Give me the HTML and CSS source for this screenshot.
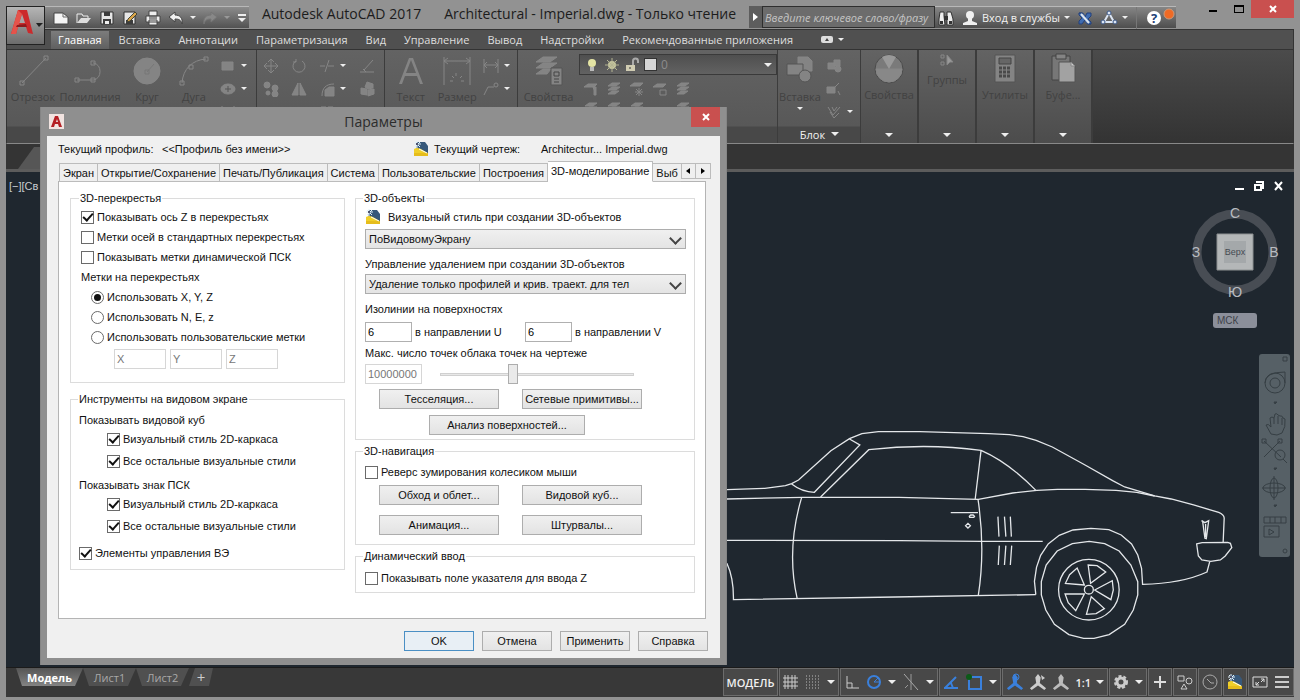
FILE: index.html
```html
<!DOCTYPE html>
<html lang="ru">
<head>
    <meta charset="UTF-8">
    <title>Autodesk AutoCAD 2017</title>
    <link rel="stylesheet" href="styles.css">
</head>
<body>
    <svg class="defs">
        <symbol id="dwg" viewBox="0 0 16 16">
            <path d="M4 1h8l3 4v7H3z" fill="#37587a"/>
            <path d="M1 8c5-3 8 1 14 4v3H1z" fill="#f0cf2a"/>
            <path d="M1 12h14v3H1z" fill="#e6bd1c"/>
            <path d="M6 8l8 4" stroke="#fff"/>
            <path d="M4 0v7M1 3h7M2 1l5 5M7 1L2 6" stroke="#dff0fa"/>
            <circle cx="4" cy="3" r="1" fill="#224"/>
        </symbol>
        <symbol id="layer" viewBox="0 0 16 16">
            <path d="M6 2h8l-4 3H2zM6 6h8l-4 3H2zM6 10h7l-4 3H2z"/>
        </symbol>
        <symbol id="person" viewBox="0 0 20 20">
            <path d="M10 1l3 4-1 6 7 6-2 2-7-5-7 5-2-2 7-6-1-6z"/>
        </symbol>
    </svg>

    <div class="window">
        <header class="titlebar">
            <button class="app-button" aria-label="Меню приложения">
                <svg width="38" height="37" viewBox="0 0 38 37">
                    <path d="M4 27L11 3h9l6 24-5-1-2-6h-8l-2 7z" fill="#cb2a2c"/>
                    <path d="M12 16l3-9 3 9z" fill="#a9a5a5"/>
                    <path d="M4 27L11 3l4 4-6 20z" fill="#e5534b"/>
                    <path d="M10 18l9-1 1 3H9z" fill="#8f191c"/>
                    <path d="M29 16h7l-4 4z" fill="#222"/>
                </svg>
            </button>
            <div class="quick">
                <button aria-label="Создать"><svg width="16" height="16"><path d="M1 3h9l5 4v7H1z" fill="#f4f4f4" stroke="#444"/><path d="M10 3v4h5" fill="none" stroke="#666"/></svg></button>
                <button aria-label="Открыть"><svg width="16" height="16"><path d="M1 13V4h5l1 2h5v2" fill="none" stroke="#eee"/><path d="M1 13l4-5h10l-4 5z" fill="#ddd"/></svg></button>
                <button aria-label="Сохранить"><svg width="16" height="16"><path d="M2 2h12v12H2z" fill="#e6e6e6" stroke="#333"/><path d="M5 2h6v4H5zM4 9h8v5H4z" fill="#3c3c3c"/><path d="M6 11h4v3H6z" fill="#eee"/></svg></button>
                <button aria-label="Сохранить как"><svg width="16" height="16"><path d="M2 2h11v12H2z" fill="#e6e6e6" stroke="#333"/><path d="M4 10h7v4H4z" fill="#3c3c3c"/><path d="M6 9l7-7 2 2-7 7-3 1z" fill="#d9a54a" stroke="#443"/></svg></button>
                <button aria-label="Печать"><svg width="16" height="16"><path d="M4 1h8v5H4zM1 6h14v6H1zM4 10h8v5H4z" fill="#eee" stroke="#444"/><path d="M4 8h8" stroke="#333"/></svg></button>
                <button aria-label="Отменить"><svg width="16" height="16"><path d="M1 7l6-5v3c5 0 8 3 7 9-1-4-3-5-7-5v3z" fill="#f0f0f0" stroke="#444"/></svg></button>
                <i class="caret"></i>
                <button aria-label="Повторить"><svg width="16" height="16"><path d="M15 7L9 2v3c-5 0-8 3-7 9 1-4 3-5 7-5v3z" fill="#888" stroke="#757575"/></svg></button>
                <i class="caret dim"></i>
                <button aria-label="Настройка"><svg width="12" height="16"><path d="M2 4h8v2H2zM2 8h8l-4 4z" fill="#eee"/></svg></button>
            </div>
            <h1 class="caption"><span>Autodesk AutoCAD 2017</span><span>Architectural - Imperial.dwg - Только чтение</span></h1>
            <div class="search">
                <button aria-label="Развернуть"><svg width="5" height="8"><path d="M0 0l5 4-5 4z" fill="#fff"/></svg></button>
                <input type="text" aria-label="Поиск" placeholder="Введите ключевое слово/фразу">
            </div>
            <div class="info">
                <button aria-label="Найти"><svg width="18" height="16"><path d="M3 2h4v4l1 9H2V9zM10 2h4l2 7v6h-6V6z" fill="#eee" stroke="#333"/><path d="M7 6h4v4H7zM3 11h3v3H3zM12 11h3v3h-3z" fill="#333"/></svg></button>
                <button class="login"><svg width="16" height="16"><circle cx="8" cy="5" r="4" fill="#f0f0f0"/><path d="M6 8h4v3l5 2v2H1v-2l5-2z" fill="#f0f0f0"/></svg>Вход в службы<i class="caret small"></i></button>
                <button aria-label="Exchange"><svg width="16" height="16"><path d="M2 3h4l8 11h-4z" fill="#dde6ef" stroke="#2a4a80"/><path d="M10 3h4v3l-3 3 3 3v2h-3L8 10l-3 4H2v-3l3-3-3-3V3h3l3 4z" fill="#3f6cb0" stroke="#24407a"/><path d="M4 4l8 9" stroke="#dde6ef" stroke-width="2"/></svg></button>
                <button aria-label="A360"><svg width="18" height="16"><path d="M9 3l5 9H4z" fill="none" stroke="#dce6f4" stroke-width="2"/><g fill="#dce6f4" stroke="#3a5686"><circle cx="9" cy="3" r="2"/><circle cx="3" cy="12" r="2"/><circle cx="15" cy="12" r="2"/></g></svg><i class="caret small"></i></button>
                <button class="help" aria-label="Справка"><svg width="31" height="22"><circle cx="9" cy="11" r="7" fill="#fff"/><text x="6" y="16" font-size="13" font-weight="700" fill="#1d3f77">?</text><circle cx="24" cy="7" r="5" fill="#ef6a25" stroke="#c99a7c"/></svg></button>
            </div>
            <div class="window-buttons">
                <button aria-label="Свернуть"><svg width="12" height="16"><path d="M2 10h8v2H2z"/></svg></button>
                <button aria-label="Развернуть"><svg width="12" height="16"><path d="M1 5h10v8H1zM2 7v5h8V7z" fill-rule="evenodd"/></svg></button>
                <button class="close" aria-label="Закрыть"><svg width="10" height="10"><path d="M2 2l6 6M8 2L2 8" stroke="#fff" stroke-width="2"/></svg></button>
            </div>
        </header>

        <nav class="ribbon-tabs">
            <a href="#" class="active">Главная</a>
            <a href="#">Вставка</a>
            <a href="#">Аннотации</a>
            <a href="#">Параметризация</a>
            <a href="#">Вид</a>
            <a href="#">Управление</a>
            <a href="#">Вывод</a>
            <a href="#">Надстройки</a>
            <a href="#">Рекомендованные приложения</a>
            <button aria-label="Свернуть ленту"><svg width="12" height="8"><rect width="12" height="7" rx="2" fill="#ddd"/><path d="M4 5h4L6 2z" fill="#444"/></svg><i class="caret small"></i></button>
        </nav>

        <div class="ribbon">
            <section class="panel draw">
                <div class="tools">
                    <button class="big"><svg width="32" height="32"><path d="M5 28L29 3" /><path d="M3 26h4v4H3zM27 1h4v4h-4z"/></svg>Отрезок</button>
                    <button class="big wide"><svg width="32" height="32"><path d="M3 25h17a9 9 0 0 0 0-17h-1"/><path d="M1 23h4v4H1zM17 23h4v4h-4zM17 6h4v4h-4z"/></svg>Полилиния</button>
                    <button class="big"><svg width="32" height="32"><circle cx="16" cy="16" r="13" class="fill"/><path d="M16 17l7-8M14 15h4v4h-4z" stroke="#777"/></svg>Круг</button>
                    <button class="big slim"><svg width="32" height="32"><path d="M4 28C5 14 14 5 28 4"/><path d="M2 26h4v4H2zM11 10h4v4h-4zM26 2h4v4h-4z"/></svg>Дуга</button>
                    <div class="grid one">
                        <button aria-label="Прямоугольник"><svg width="16" height="16"><path d="M2 4h11v8H2z" class="fill"/></svg><i class="caret small"></i></button>
                        <button aria-label="Эллипс"><svg width="16" height="16"><ellipse cx="8" cy="8" rx="7" ry="5" class="fill"/><path d="M8 5v6M5 8h6" stroke="#555"/></svg><i class="caret small"></i></button>
                        <button aria-label="Штриховка"><svg width="16" height="16"><path d="M2 4h12M2 2v12M14 2v12"/></svg></button>
                    </div>
                </div>
            </section>
            <section class="panel modify">
                <div class="grid">
                    <button aria-label="Перенести"><svg width="16" height="16"><path d="M8 1v14M1 8h14M5 4l3-3 3 3M5 12l3 3 3-3M4 5L1 8l3 3M12 5l3 3-3 3"/></svg></button>
                    <button aria-label="Повернуть"><svg width="16" height="16"><path d="M5 3a6 6 0 1 0 6 0M5 1v3H2"/></svg></button>
                    <button aria-label="Обрезать"><svg width="16" height="16"><path d="M1 8h5M9 8h6M10 2L6 14"/></svg><i class="caret small"></i></button>
                    <button aria-label="Стереть"><svg width="16" height="16"><path d="M1 14h14M5 12l9-10"/><path d="M4 11l3 3"/></svg></button>
                    <button aria-label="Копировать"><svg width="16" height="16" class="solid"><circle cx="4" cy="4" r="3"/><circle cx="12" cy="7" r="3"/><circle cx="5" cy="12" r="2"/><circle cx="12" cy="13" r="3"/></svg></button>
                    <button aria-label="Зеркало"><svg width="16" height="16" class="solid"><path d="M7 2v12H1zM9 2v12h6z"/></svg></button>
                    <button aria-label="Сопряжение"><svg width="16" height="16"><path d="M3 15C3 7 7 3 15 3"/><path d="M6 15V9l4-3h5v9z" class="fill"/></svg><i class="caret small"></i></button>
                    <button aria-label="Расчленить"><svg width="16" height="16" class="solid"><path d="M8 1l6 2v4l-5 1-3-2zM2 7l6 1v6l-6-1zM9 9l6-1v5l-6 2z"/></svg></button>
                    <button aria-label="Растянуть"><svg width="16" height="16"><path d="M2 4h8v9H2z"/></svg></button>
                    <button aria-label="Масштаб"><svg width="16" height="16"><path d="M2 4h12v9H2z" class="fill"/></svg></button>
                    <button aria-label="Массив"><svg width="16" height="16" class="solid"><path d="M2 3h5v4H2zM9 3h5v4H9z"/></svg></button>
                    <button aria-label="Подобие"><svg width="16" height="16"><path d="M4 8l4-5 4 5"/></svg></button>
                </div>
            </section>
            <section class="panel annotate">
                <div class="tools">
                    <button class="big"><svg width="32" height="32" class="solid"><path d="M14 3h4l10 26h-3l-3-8H10l-3 8H4zM11 18h10l-5-13z" stroke="none"/></svg>Текст</button>
                    <button class="big slim"><svg width="32" height="32"><path d="M3 2v28M29 2v28M3 6h26M7 3L3 6l4 3M25 3l4 3-4 3"/><path d="M9 26h3M20 26h3M15 18v3M11 21l2 2M21 21l-2 2"/></svg>Размер</button>
                    <div class="grid one">
                        <button aria-label="Линейный"><svg width="16" height="16"><path d="M1 1v14M15 1v14M1 7h14M4 4L1 7l3 3M12 4l3 3-3 3"/></svg><i class="caret small"></i></button>
                        <button aria-label="Выноска"><svg width="16" height="16"><path d="M1 14L5 6h6"/><circle cx="13" cy="4" r="2"/></svg><i class="caret small"></i></button>
                        <button aria-label="Таблица"><svg width="16" height="16"><path d="M2 4h12v9H2z"/></svg></button>
                    </div>
                </div>
            </section>
            <section class="panel layers">
                <div class="tools">
                    <button class="big wide"><svg width="32" height="32"><g class="fill"><path d="M10 2h14l-7 5H3zM10 8h14l-7 5H3zM10 14h8l-4 5H3z"/><path d="M18 13h11v17H18z" stroke="#555"/></g><path d="M21 17h5v4h-5zM21 24h5M21 27h5" stroke="#444"/></svg>Свойства</button>
                    <div class="layer-tools">
                        <button class="combo">
                            <svg width="16" height="16"><circle cx="8" cy="6" r="4" fill="#e4e4a4"/><path d="M6 10h4v4H6z" fill="#bbb"/></svg>
                            <svg width="16" height="16"><circle cx="8" cy="8" r="4" fill="#c9c9a0"/><path d="M8 1v14M1 8h14M3 3l10 10M13 3L3 13" stroke="#b4b492"/></svg>
                            <svg width="16" height="16"><path d="M2 8h9v6H2z" fill="#d0ccb2"/><path d="M9 8V4a2 2 0 0 1 5 0v2" fill="none" stroke="#aaa" stroke-width="2"/><path d="M6 10v2" stroke="#333"/></svg>
                            <b class="swatch"></b>
                            <span>0</span>
                            <i class="caret"></i>
                        </button>
                        <div class="layer-icons">
                            <button aria-label="Отключить слой"><svg width="16" height="16" class="solid"><path d="M5 3h9l-3 3H1zM10 6h3v8h-2V9z"/></svg></button>
                            <button aria-label="Изолировать слой"><svg width="16" height="16" class="solid"><use href="#layer"/></svg></button>
                            <button aria-label="Заморозить слой"><svg width="16" height="16" class="solid"><path d="M5 2h9l-3 3H1z"/><path d="M10 7v8M6 11h8M7 8l6 6M13 8l-6 6"/></svg></button>
                            <button aria-label="Блокировать слой"><svg width="16" height="16" class="solid"><path d="M5 3h9l-3 3H1z"/><path d="M8 9h6v5H8z" fill="none"/></svg></button>
                            <button aria-label="Сделать текущим"><svg width="16" height="16" class="solid"><use href="#layer"/></svg></button>
                            <button aria-label="Включить слои"><svg width="16" height="16" class="solid"><use href="#layer"/></svg></button>
                            <button aria-label="Разизолировать"><svg width="16" height="16" class="solid"><use href="#layer"/></svg></button>
                            <button aria-label="Разморозить"><svg width="16" height="16" class="solid"><use href="#layer"/></svg></button>
                            <span></span>
                            <button aria-label="Копия свойств слоя"><svg width="16" height="16" class="solid"><use href="#layer"/></svg></button>
                        </div>
                    </div>
                </div>
            </section>
            <section class="panel block">
                <div class="tools">
                    <button class="big"><svg width="32" height="32" class="solid"><path d="M14 2h10l4 4v10H14z"/><path d="M3 9h16v11H3z" stroke="#555"/><circle cx="21" cy="21" r="6" stroke="#555"/></svg>Вставка<i class="caret small"></i></button>
                    <div class="grid one">
                        <button aria-label="Создать блок"><svg width="16" height="16" class="solid"><path d="M2 5h7v6H2zM8 2h6v6H8z"/><circle cx="12" cy="11" r="3"/></svg></button>
                        <button aria-label="Редактор блоков"><svg width="16" height="16" class="solid"><path d="M1 6h8v6H1z"/><path d="M7 8l6-6M12 10l2 4"/></svg></button>
                        <button aria-label="Атрибуты"><svg width="16" height="16"><path d="M2 3l5 8 7-8M4 8l4 6 5-5M6 3l2 4 3-4"/></svg><i class="caret small"></i></button>
                    </div>
                </div>
                <button class="panel-title">Блок <i class="caret"></i></button>
            </section>
            <section class="panel mini">
                <button class="big"><svg width="32" height="32"><circle cx="16" cy="16" r="14" fill="#7a7a7a" stroke="#4b4b4b"/><path d="M3 16h26a13 13 0 0 1-26 0z" fill="#888"/><path d="M16 16L9 4a14 14 0 0 1 14 0z" fill="#999" stroke="none"/></svg>Свойства</button>
                <i class="caret"></i>
            </section>
            <section class="panel mini">
                <button class="big short"><svg width="16" height="16"><path d="M2 2h3v3H2zM2 9h3v3H2z"/><path d="M8 2v10l3-3h3z" fill="#999"/></svg>Группы</button>
                <i class="caret"></i>
            </section>
            <section class="panel mini">
                <button class="big"><svg width="32" height="32"><path d="M6 2h20v27H6z" class="fill" stroke="#555"/><path d="M10 5h12v6H10z" fill="#666" stroke="#444"/><path d="M10 15h12M10 19h12M10 23h12" stroke="#4a4a4a" stroke-width="3" stroke-dasharray="3 1"/></svg>Утилиты</button>
                <i class="caret"></i>
            </section>
            <section class="panel mini">
                <button class="big"><svg width="32" height="32"><path d="M5 3h18v24H5z" fill="#777" stroke="#444"/><path d="M9 1h10v5H9z" class="fill" stroke="#444"/><path d="M12 9h12l4 4v16H12z" fill="#a2a2a2" stroke="#555"/><path d="M24 9v4h4z" fill="#ccc"/></svg>Буфе...</button>
                <i class="caret"></i>
            </section>
        </div>

        <div class="file-tabs"><span class="file-tab"></span></div>

        <main class="viewport">
            <span class="view-label">[−][Св</span>
            <div class="doc-buttons">
                <svg width="50" height="12" fill="none" stroke="#fff" stroke-width="2"><path d="M1 9h9"/><path d="M21 5h6v5h-6zM23 3V2h6v6h-1"/><path d="M41 2l7 8M48 2l-7 8"/></svg>
            </div>
            <svg class="car" width="540" height="260" viewBox="0 0 540 260">
                <g transform="scale(.3444 .3333)">
                    <!-- body outline -->
                    <path d="M20 269L130 265 190 257 208 251 228 240 322 152 376 116 412 101 460 95H580L780 101 840 104 880 110 918 121 965 141 1060 195 1140 242 1175 261 1262 288 1310 297 1375 315 1448 337Q1463 343 1464 354L1461 426"/>
                    <path d="M20 297L240 292H520L750 298 850 279 920 271 980 268H1060L1150 271 1210 277 1262 288"/>
                    <path d="M20 421L520 422 760 424H937"/>
                    <path d="M20 490q20 45 19 109L509 591 917 584"/>
                    <!-- glass -->
                    <path d="M208 252q30 24 66 25L406 135l-30-18"/>
                    <path d="M292 291l140-142q170-20 326 2 80 36 160 121M758 151l-17 146"/>
                    <!-- door -->
                    <path d="M237 293q-45 155-13 302M749 297q22 150 1 289M670 338h79"/>
                    <path d="M724 349l4-4h7l4 4-2 3h-12zM713 377l7-7 7 7-7 7z"/>
                    <path d="M807 350l3 60M826 350l4 60M843 350l3 60M811 437l-3 58M830 437l-4 58M847 437l-4 58"/>
                    <!-- rear arch and bumper -->
                    <path d="M917 584L913 544 919 502 931 466 953 432 985 406 1025 390 1077 385 1129 389 1165 405 1195 432 1213 465 1224 505 1227 553Q1340 551 1414 516L1422 485"/>
                    <path d="M1384 432l16-4 74-1 8 3 4 13-19 25-14 12-28 4-26-4-10-12z"/>
                    <path d="M1398 362l10 6 11-6-7 54-4-1-7-54M1410 372v40"/>
                    <!-- wheel -->
                    <path d="M1072 424l45 7 42 22 34 42 20 50v40l-13 45-25 43-45 31-44 11h-30l-43-11-42-31-25-43-13-45v-40l14-50 32-42 44-22z"/>
                    <ellipse cx="1071" cy="569" rx="88" ry="91"/>
                    <ellipse cx="1071" cy="569" rx="13" ry="13"/>
                    <path d="M1076 550l-7-55 26 2 25 19zM1088 570l51-28 3 28-7 29zM1078 590l38 36-24 15-28 2zM1058 582l-25 50-22-24-9-26zM1058 555l-55-5 12-26 22-20z"/>
                </g>
            </svg>
            <svg class="viewcube" width="90" height="90" viewBox="0 0 90 90">
                <circle cx="45" cy="45" r="38" fill="none" stroke="#484d54" stroke-width="9"/>
                <path d="M27 27h36v36H27z" fill="#b4b7b8" stroke="#8d9192"/>
                <path d="M34 34h22v22H34z" fill="#a4a8aa"/>
                <g fill="#b9bcc0" font-size="14" text-anchor="middle"><text x="45" y="11">С</text><text x="45" y="90">Ю</text><text x="6" y="50">З</text><text x="84" y="50">В</text></g>
                <text x="45" y="48" font-size="9" text-anchor="middle" fill="#444b52">Верх</text>
            </svg>
            <button class="ucs">МСК</button>
            <div class="navbar">
                <svg width="31" height="203" viewBox="0 0 31 203" fill="none" stroke="#363f44">
                    <circle cx="16" cy="29" r="10"/><circle cx="16" cy="29" r="5"/><path d="M6 29q0-11 20-11v11M24 3h4v4h-4z"/>
                    <path d="M15 48h3l-2 2zM15 114h3l-2 2zM15 151h3l-2 2z" fill="#363f44"/>
                    <path d="M12 80l-5-9q2-2 5 2l-1-9q2-2 4 0l1-4q2-1 3 1l2 1q2-1 3 2l2 1q1 8-3 14l-5 2z M15 70v-6M19 70v-8M23 71v-7"/>
                    <path d="M5 87l17 16M21 87L5 103M3 85h4v4H3zM19 85h4v4h-4z"/><circle cx="21" cy="101" r="5"/><path d="M24 105l4 4"/>
                    <ellipse cx="15" cy="134" rx="11" ry="5"/><ellipse cx="15" cy="134" rx="4" ry="10"/><path d="M15 122v24M3 134h24"/>
                    <path d="M5 163h22v6H5zM11 163v6M16 163v6M22 163v6M5 172h15v11H5z"/><path d="M10 175l5 3-5 3z"/><circle cx="26" cy="197" r="2"/>
                </svg>
            </div>
        </main>

        <footer class="bottom">
            <div class="layout-tabs">
                <button class="active">Модель</button>
                <button>Лист1</button>
                <button>Лист2</button>
                <button class="plus">+</button>
            </div>
            <div class="status">
                <div class="cell"><button class="space">МОДЕЛЬ</button></div>
                <div class="cell">
                    <svg width="16" height="16"><path d="M2 1v14M5 1v14M9 1v14M12 1v14M0 4h15M0 8h15M0 12h15" stroke="#ccc"/></svg>
                    <svg width="16" height="16"><path d="M1 2h14M1 5h14M1 8h14M1 11h14M1 14h14" stroke="#bbb" stroke-dasharray="1 2"/></svg>
                    <i class="caret"></i>
                </div>
                <div class="cell">
                    <svg width="16" height="16"><path d="M3 2v12h12M3 9h5v5" stroke="#ccc" fill="none"/></svg>
                    <svg width="16" height="16"><circle cx="8" cy="8" r="6" fill="none" stroke="#3a80dc" stroke-width="2"/><path d="M8 8h6M8 8l4-4" stroke="#3a80dc"/></svg>
                    <i class="caret"></i>
                    <svg width="18" height="18"><path d="M2 1l14 16" stroke="#aaa"/><path d="M9 1v16M3 15l3-3" stroke="#999"/></svg>
                    <i class="caret"></i>
                </div>
                <div class="cell">
                    <svg width="16" height="16"><path d="M2 14L13 3M1 14h14M8 9l2 5" stroke="#3a80dc" stroke-width="2"/></svg>
                    <svg width="18" height="18"><path d="M4 4h12v12H4z" fill="none" stroke="#3a80dc" stroke-width="2"/><circle cx="4" cy="4" r="3" fill="#0b5a17"/></svg>
                    <i class="caret"></i>
                </div>
                <div class="cell scale">
                    <svg width="18" height="18" fill="#3a80dc"><use href="#person"/><circle cx="10" cy="4" r="3" fill="none" stroke="#3a80dc"/></svg>
                    <svg width="18" height="18" fill="#ccc"><use href="#person"/><path d="M12 2l4 3-3 2z"/></svg>
                    <svg width="18" height="18" fill="#bbb"><use href="#person"/></svg>
                    <button>1:1</button>
                    <i class="caret"></i>
                </div>
                <div class="cell">
                    <svg width="16" height="16"><circle cx="8" cy="8" r="4" fill="none" stroke="#ccc" stroke-width="3"/><circle cx="8" cy="8" r="6" fill="none" stroke="#ccc" stroke-width="2" stroke-dasharray="3 2"/></svg>
                    <i class="caret"></i>
                </div>
                <div class="cell"><svg width="16" height="16"><path d="M8 2v12M2 8h12" stroke="#ddd" stroke-width="2"/></svg></div>
                <div class="cell"><svg width="16" height="16" fill="none" stroke="#ccc"><path d="M1 2h6v5H1zM4 15l3-5 3 5z"/><circle cx="12" cy="7" r="3"/></svg></div>
                <div class="cell"><svg width="16" height="16" fill="none" stroke="#aaa"><circle cx="8" cy="8" r="7"/><path d="M5 5l4 4h3"/></svg></div>
                <div class="cell"><svg width="16" height="16"><use href="#dwg"/></svg></div>
                <div class="cell">
                    <svg width="16" height="16" fill="none" stroke="#ddd"><path d="M1 3h14v10H1zM4 11l3-3M4 8v3h3M12 5L9 8M9 5h3v3"/></svg>
                    <svg width="16" height="16"><path d="M1 3h14M1 8h14M1 13h14" stroke="#ccc" stroke-width="2"/></svg>
                </div>
            </div>
        </footer>

        <div class="dialog" role="dialog" aria-label="Параметры">
            <div class="dialog-head">
                <svg width="15" height="15"><path d="M0 0h15v15H0z" fill="#f1e3e0"/><path d="M2 13L6 2h3l4 11h-3l-1-3H6l-1 3zM7 8h2L8 5z" fill="#b41f24" fill-rule="evenodd"/></svg>
                <h2>Параметры</h2>
                <button class="close" aria-label="Закрыть"><svg width="10" height="10"><path d="M2 2l6 6M8 2L2 8" stroke="#fff" stroke-width="2"/></svg></button>
            </div>
            <div class="dialog-body">
                <div class="profile">
                    <span class="profile-label">Текущий профиль:</span>
                    <span class="profile-name">&lt;&lt;Профиль без имени&gt;&gt;</span>
                    <svg width="16" height="16"><use href="#dwg"/></svg>
                    <span class="drawing-label">Текущий чертеж:</span>
                    <span>Architectur... Imperial.dwg</span>
                </div>
                <div class="tabs">
                    <button>Экран</button>
                    <button>Открытие/Сохранение</button>
                    <button>Печать/Публикация</button>
                    <button>Система</button>
                    <button>Пользовательские</button>
                    <button>Построения</button>
                    <button class="active">3D-моделирование</button>
                    <button class="cut">Выб</button>
                    <div class="scroll">
                        <button aria-label="Назад"><svg width="4" height="6"><path d="M4 0v6L0 3z"/></svg></button>
                        <button aria-label="Вперед"><svg width="4" height="6"><path d="M0 0v6l4-3z"/></svg></button>
                    </div>
                </div>
                <div class="sheet">
                    <div class="col left">
                        <fieldset class="crosshair">
                            <legend>3D-перекрестья</legend>
                            <label class="row"><input type="checkbox" checked>Показывать ось Z в перекрестьях</label>
                            <label class="row"><input type="checkbox">Метки осей в стандартных перекрестьях</label>
                            <label class="row"><input type="checkbox">Показывать метки динамической ПСК</label>
                            <div class="row">Метки на перекрестьях</div>
                            <label class="row radio"><input type="radio" name="labels" checked>Использовать X, Y, Z</label>
                            <label class="row radio"><input type="radio" name="labels">Использовать N, E, z</label>
                            <label class="row radio"><input type="radio" name="labels">Использовать пользовательские метки</label>
                            <div class="axes">
                                <input type="text" value="X" aria-label="X" disabled>
                                <input type="text" value="Y" aria-label="Y" disabled>
                                <input type="text" value="Z" aria-label="Z" disabled>
                            </div>
                        </fieldset>
                        <fieldset class="display">
                            <legend>Инструменты на видовом экране</legend>
                            <div class="sub">Показывать видовой куб</div>
                            <label class="row in"><input type="checkbox" checked>Визуальный стиль 2D-каркаса</label>
                            <label class="row in"><input type="checkbox" checked>Все остальные визуальные стили</label>
                            <div class="sub">Показывать знак ПСК</div>
                            <label class="row in"><input type="checkbox" checked>Визуальный стиль 2D-каркаса</label>
                            <label class="row in"><input type="checkbox" checked>Все остальные визуальные стили</label>
                            <label class="row last"><input type="checkbox" checked>Элементы управления ВЭ</label>
                        </fieldset>
                    </div>
                    <div class="col right">
                        <fieldset class="objects">
                            <legend>3D-объекты</legend>
                            <label class="row icon" for="style"><svg width="16" height="16"><use href="#dwg"/></svg>Визуальный стиль при создании 3D-объектов</label>
                            <div class="select"><select id="style"><option>ПоВидовомуЭкрану</option></select></div>
                            <label class="row" for="deletion">Управление удалением при создании 3D-объектов</label>
                            <div class="select"><select id="deletion"><option>Удаление только профилей и крив. траект. для тел</option></select></div>
                            <div class="row">Изолинии на поверхностях</div>
                            <div class="isolines">
                                <label><input type="text" value="6">в направлении U</label>
                                <label><input type="text" value="6">в направлении V</label>
                            </div>
                            <label class="row points" for="points">Макс. число точек облака точек на чертеже</label>
                            <div class="cloud">
                                <input type="text" id="points" value="10000000" disabled>
                                <input type="range" min="0" max="100" value="37" aria-label="Число точек">
                            </div>
                            <div class="buttons">
                                <button>Тесселяция...</button>
                                <button>Сетевые примитивы...</button>
                                <button class="long">Анализ поверхностей...</button>
                            </div>
                        </fieldset>
                        <fieldset class="navigation">
                            <legend>3D-навигация</legend>
                            <label class="row"><input type="checkbox">Реверс зумирования колесиком мыши</label>
                            <div class="buttons">
                                <button>Обход и облет...</button>
                                <button>Видовой куб...</button>
                                <button>Анимация...</button>
                                <button>Штурвалы...</button>
                            </div>
                        </fieldset>
                        <fieldset class="dynamic">
                            <legend>Динамический ввод</legend>
                            <label class="row"><input type="checkbox">Показывать поле указателя для ввода Z</label>
                        </fieldset>
                    </div>
                </div>
                <div class="actions">
                    <button class="default">OK</button>
                    <button>Отмена</button>
                    <button>Применить</button>
                    <button>Справка</button>
                </div>
            </div>
        </div>
    </div>
</body>
</html>
```

FILE: styles.css
```css
* {
    box-sizing: border-box;
}
body {
    margin: 0;
    background: #929292;
    font-family: "Open Sans", "Noto Sans", sans-serif;
    font-size: 12px;
}
button {
    padding: 0;
    border: 0;
    background: none;
    font: inherit;
    color: inherit;
    display: flex;
    align-items: center;
    justify-content: center;
    white-space: nowrap;
}
svg {
    flex: none;
    display: block;
}
.defs {
    position: absolute;
    width: 0;
    height: 0;
}
.caret {
    flex: none;
    border: 4px solid transparent;
    border-top-color: #eee;
    border-bottom: 0;
}
.caret.small {
    border-width: 3px;
    border-bottom: 0;
}
.caret.dim {
    border-top-color: #999;
}

.window {
    position: relative;
    display: flex;
    flex-direction: column;
    min-height: 100vh;
    padding: 0 6px 3px;
}

/* title bar */
.titlebar {
    position: relative;
    display: flex;
    height: 29px;
    padding-left: 38px;
}
.app-button {
    position: absolute;
    z-index: 1;
    left: 0;
    top: 6px;
    width: 39px;
    height: 39px;
    border: 1px solid #222;
    background: linear-gradient(#b5b5b5, #6c6c6c);
}
.quick {
    display: flex;
    align-items: center;
    gap: 7px;
    flex: none;
    width: 205px;
    height: 22px;
    margin-top: 6px;
    padding-left: 9px;
    border-top: 1px solid #b8b8b8;
    background: linear-gradient(#8c8c8c, #525252);
}
.quick .caret {
    border-width: 3px;
    border-bottom: 0;
    margin: 0 -1px;
}
.caption {
    flex: 1;
    display: flex;
    justify-content: center;
    gap: 23px;
    margin: 0;
    font-size: 14px;
    font-weight: 400;
    line-height: 28px;
    white-space: nowrap;
    color: #1c1c1c;
}
.search {
    display: flex;
    height: 22px;
    margin-top: 6px;
}
.search button {
    width: 13px;
    background: #5d5d5d;
}
.search input {
    width: 173px;
    padding: 0 2px;
    border: 1px solid #2e2e2e;
    background: #6c6c6c;
    font: italic 11px "Open Sans", sans-serif;
}
.search input::placeholder {
    color: #c4c4c4;
}
.info {
    display: flex;
    align-items: center;
    gap: 7px;
    flex: none;
    width: 241px;
    height: 22px;
    margin-top: 6px;
    padding-left: 2px;
    border-top: 1px solid #b8b8b8;
    background: linear-gradient(#868686, #4e4e4e);
    color: #f2f2f2;
    font-size: 11px;
}
.info button {
    gap: 4px;
}
.info .help {
    margin-left: auto;
    border-left: 1px solid #777;
    padding-left: 8px;
}
.window-buttons {
    display: flex;
    align-items: flex-start;
    gap: 14px;
    margin-left: 31px;
}
.close {
    background: #c9504f;
}
.window-buttons .close {
    width: 43px;
    height: 18px;
    margin-left: -8px;
}

/* ribbon */
.ribbon-tabs {
    display: flex;
    align-items: center;
    gap: 18px;
    height: 20px;
    padding-left: 44px;
    border: 1px solid #333;
    border-bottom: 0;
    background: #505050;
}
.ribbon-tabs a {
    color: #dedede;
    text-decoration: none;
    white-space: nowrap;
    font-size: 11px;
    line-height: 18px;
}
.ribbon-tabs .active {
    padding: 0 7px;
    margin-right: -8px;
    background: linear-gradient(#7c7c7c, #606060);
    color: #fff;
}
.ribbon-tabs button {
    gap: 5px;
    margin-left: 10px;
}
.ribbon {
    display: flex;
    height: 95px;
    border: 1px solid #333;
    border-bottom-color: #888;
    background: linear-gradient(#4b4b4b, #333);
}
.panel {
    flex: none;
    display: flex;
    flex-direction: column;
    border-right: 1px solid #3c3c3c;
    background: linear-gradient(#636363, #585858 76px, #484848 77px);
    color: #424242;
}
.panel svg {
    fill: none;
    stroke: #868686;
}
.panel .fill,
.panel .solid {
    fill: #848484;
}
.tools {
    display: flex;
    align-items: flex-start;
}
.draw {
    width: 250px;
}
.modify {
    width: 128px;
}
.annotate {
    width: 133px;
}
.layers {
    width: 260px;
}
.block {
    width: 83px;
    padding-left: 1px;
}
.mini {
    width: 58px;
    align-items: center;
    justify-content: space-between;
    border-right-width: 2px;
    padding-bottom: 6px;
    background: linear-gradient(#636363, #4c4c4c);
}
.big {
    flex-direction: column;
    width: 52px;
    padding-top: 5px;
    font-size: 11px;
    line-height: 20px;
}
.big.wide {
    width: 62px;
}
.big.slim {
    width: 42px;
}
.mini .big {
    padding-top: 3px;
}
.big.short {
    line-height: 22px;
}
.grid {
    display: grid;
    grid-template-columns: 28px 28px 40px 28px;
    grid-auto-rows: 23px;
    padding: 4px 0 0 6px;
}
.grid button {
    justify-content: flex-start;
    gap: 5px;
}
.grid.one {
    grid-template-columns: 34px;
    padding-left: 5px;
}
.layer-tools {
    flex: 1;
    padding-top: 4px;
}
.combo {
    gap: 4px;
    width: 198px;
    height: 21px;
    padding: 0 4px;
    border: 1px solid #3a3a3a;
    background: linear-gradient(#4f4f4f, #626262);
    color: #8c8c8c;
}
.panel .combo svg {
    stroke: none;
}
.combo .swatch {
    width: 13px;
    height: 13px;
    border: 1px solid #333;
    background: #d5d5d5;
}
.combo .caret {
    margin-left: auto;
}
.layer-icons {
    display: grid;
    grid-template-columns: repeat(5, 23px);
    grid-auto-rows: 20px;
    padding-top: 4px;
}
.panel-title {
    gap: 6px;
    margin-top: auto;
    height: 18px;
    color: #f2f2f2;
    font-size: 11px;
}
.file-tabs {
    height: 28px;
    padding: 3px 0 0 12px;
    border-bottom: 3px solid #5c5c5c;
    background: #343434;
}
.file-tab {
    display: block;
    width: 100px;
    height: 22px;
    background: #565656;
    clip-path: polygon(16px 0, 100% 0, 100% 100%, 0 100%);
}

/* drawing area */
.viewport {
    position: relative;
    flex: 1;
    min-height: 495px;
    background: #1f272f;
}
.view-label {
    position: absolute;
    left: 3px;
    top: 6px;
    color: #c8ccd0;
    font: 11px/16px "Liberation Sans", sans-serif;
}
.doc-buttons {
    position: absolute;
    top: 8px;
    right: 10px;
}
.car {
    position: absolute;
    top: 228px;
    right: 34px;
    fill: none;
    stroke: #e4e7ea;
    stroke-width: 1.3;
}
.car path,
.car ellipse {
    vector-effect: non-scaling-stroke;
}
.viewcube {
    position: absolute;
    top: 35px;
    right: 14px;
    overflow: visible;
    font-family: "Liberation Sans", sans-serif;
}
.ucs {
    position: absolute;
    top: 141px;
    right: 37px;
    width: 44px;
    height: 15px;
    padding-left: 4px;
    border-radius: 3px;
    justify-content: flex-start;
    background: #8b8f9a;
    color: #3d4148;
    font: 10px "Liberation Sans", sans-serif;
}
.navbar {
    position: absolute;
    top: 182px;
    right: 4px;
    width: 31px;
    height: 203px;
    border-radius: 3px;
    background: #566066;
}

/* layout tabs and status bar */
.bottom {
    display: flex;
    justify-content: space-between;
    height: 30px;
    border-top: 1px solid #1b1b1b;
    background: #383838;
}
.layout-tabs {
    display: flex;
    padding-left: 10px;
}
.layout-tabs button {
    width: 53px;
    height: 18px;
    background: #505050;
    clip-path: polygon(0 0, 100% 0, calc(100% - 8px) 100%, 6px 100%);
    color: #a8a8a8;
    font-size: 11px;
}
.layout-tabs .active {
    width: 67px;
    background: linear-gradient(#555, #838383);
    color: #fff;
    font-weight: 700;
}
.layout-tabs .plus {
    width: 24px;
    font-size: 15px;
    color: #ccc;
    clip-path: polygon(6px 0, 100% 0, calc(100% - 4px) 100%, 0 100%);
}
.status {
    display: flex;
    gap: 1px;
    color: #f0f0f0;
    background: #3c3c3c;
    font-size: 11px;
    font-weight: 600;
}
.cell {
    display: flex;
    align-items: center;
    gap: 6px;
    padding: 0 3px;
    border: 1px solid #6c6c6c;
    background: #484848;
    height: 28px;
}
.cell.scale {
    gap: 5px;
}

/* dialog */
.dialog {
    position: absolute;
    left: 40px;
    top: 107px;
    width: 687px;
    padding: 0 6px 7px;
    background: #8f8f8f;
    border: 1px solid #858585;
    border-width: 0 1px;
    color: #111;
}
.dialog-head {
    display: flex;
    align-items: center;
    height: 29px;
    padding-left: 2px;
}
.dialog h2 {
    flex: 1;
    margin: 0;
    padding-left: 12px;
    text-align: center;
    font-size: 14px;
    font-weight: 400;
    color: #2c2c2c;
}
.dialog-head .close {
    align-self: flex-start;
    width: 29px;
    height: 20px;
}
.dialog-body,
.dialog-body input,
.dialog-body select {
    font: 11px "Liberation Sans", Arial, sans-serif;
}
.dialog-body {
    padding: 0 12px 7px 11px;
    background: #f0f0f0;
}
.profile {
    display: flex;
    align-items: center;
    height: 25px;
}
.profile-label {
    width: 104px;
}
.profile-name {
    width: 251px;
}
.drawing-label {
    width: 112px;
    padding-left: 5px;
}
.tabs {
    display: flex;
    align-items: flex-end;
    height: 21px;
    margin-bottom: -1px;
    padding-left: 1px;
}
.tabs button {
    height: 19px;
    padding: 0 3px;
    border: 1px solid #bcbcbc;
    border-left-width: 0;
    background: #efefef;
}
.tabs > button:first-child {
    border-left-width: 1px;
}
.tabs .active {
    height: 21px;
    padding-bottom: 2px;
    border-bottom-color: #fff;
    background: #fff;
}
.tabs .cut {
    flex: 1;
    justify-content: flex-start;
    border-right: 0;
}
.scroll {
    display: flex;
    align-self: flex-start;
    margin-top: 2px;
}
.scroll button {
    width: 15px;
    height: 16px;
    border-left-width: 1px;
}
.scroll button + button {
    border-left-width: 0;
}
.sheet {
    display: flex;
    gap: 10px;
    height: 438px;
    margin-right: 2px;
    padding: 8px 10px 0 11px;
    border: 1px solid #b4b4b4;
    background: #fff;
}
.col {
    display: flex;
    flex-direction: column;
}
.left {
    width: 275px;
    gap: 8px;
}
.right {
    flex: 1;
    gap: 3px;
}
fieldset {
    min-width: 0;
    margin: 0;
    padding: 1px 8px 4px 9px;
    border: 1px solid #dcdcdc;
}
legend {
    margin-left: -2px;
    padding: 0 1px;
    line-height: 16px;
}
.row {
    display: flex;
    align-items: center;
    height: 20px;
    white-space: nowrap;
}
input[type="checkbox"],
input[type="radio"] {
    appearance: none;
    flex: none;
    display: grid;
    place-items: center;
    width: 13px;
    height: 13px;
    margin: 0 3px 0 0;
    border: 1px solid #6a6a6a;
    background: #fff;
}
input[type="radio"] {
    border-radius: 50%;
}
input[type="checkbox"]:checked::after {
    content: "";
    width: 4px;
    height: 8px;
    margin-top: -2px;
    border: solid #111;
    border-width: 0 2px 2px 0;
    transform: rotate(42deg);
}
input[type="radio"]:checked::after {
    content: "";
    width: 7px;
    height: 7px;
    border-radius: 50%;
    background: #111;
}
input[type="text"] {
    border-radius: 0;
}
.dialog-body input[type="text"] {
    height: 20px;
    padding: 0 2px;
    border: 1px solid #b0b0b0;
    background: #fff;
}
.dialog-body input:disabled {
    border-color: #d6d6d6;
    color: #777;
}
.crosshair {
    padding: 1px 8px 13px 10px;
}
.radio {
    padding-left: 10px;
}
.axes {
    display: flex;
    gap: 4px;
    margin-top: 2px;
    padding-left: 33px;
}
.axes input {
    width: 52px;
}
.display {
    padding: 0 8px 5px;
}
.display legend {
    margin-left: -1px;
}
.sub {
    margin-top: 5px;
    line-height: 16px;
}
.display .row {
    height: 22px;
}
.display .in {
    padding-left: 28px;
}
.display .last {
    margin-top: 5px;
}
.icon {
    gap: 7px;
    margin-bottom: 2px;
}
.select {
    position: relative;
    margin-bottom: 5px;
}
.select::after {
    content: "";
    position: absolute;
    right: 6px;
    top: 5px;
    width: 7px;
    height: 7px;
    border: solid #444;
    border-width: 0 2px 2px 0;
    transform: rotate(45deg);
}
.select select {
    display: block;
    appearance: none;
    width: 100%;
    height: 20px;
    padding: 0 3px;
    border: 1px solid #adadad;
    border-radius: 0;
    background: linear-gradient(#f0f0f0, #e4e4e4);
    color: #111;
}
.isolines {
    display: flex;
    margin-top: 3px;
}
.isolines label {
    display: flex;
    align-items: center;
    width: 160px;
}
.isolines input {
    width: 47px;
    margin-right: 3px;
}
.points {
    margin-top: 1px;
}
.cloud {
    display: flex;
    align-items: center;
    gap: 18px;
    margin-top: 1px;
}
.cloud input[type="text"] {
    width: 57px;
}
input[type="range"] {
    appearance: none;
    width: 194px;
    height: 20px;
    margin: 0;
    background: none;
}
input[type="range"]::-webkit-slider-runnable-track {
    height: 3px;
    border: 1px solid #d0d0d0;
    background: #e8e8e8;
}
input[type="range"]::-webkit-slider-thumb {
    appearance: none;
    width: 10px;
    height: 20px;
    margin-top: -10px;
    border: 1px solid #adadad;
    background: #eaeaea;
}
.buttons {
    display: grid;
    grid-template-columns: 120px 120px;
    gap: 6px 23px;
    margin-top: 5px;
    padding-left: 14px;
}
.buttons button,
.actions button {
    height: 20px;
    border: 1px solid #adadad;
    background: linear-gradient(#f0f0f0, #e3e3e3);
}
.buttons .long {
    grid-column: span 2;
    width: 156px;
    margin-left: 50px;
}
.navigation {
    padding: 3px 8px 9px 9px;
}
.navigation .buttons {
    row-gap: 10px;
    margin-top: 3px;
}
.dynamic {
    padding-top: 4px;
}
.actions {
    display: flex;
    justify-content: flex-end;
    gap: 8px;
    margin-top: 12px;
}
.actions button {
    width: 70px;
}
.actions .default {
    border-color: #4a8fc4;
    background: #e8eff5;
}
```
